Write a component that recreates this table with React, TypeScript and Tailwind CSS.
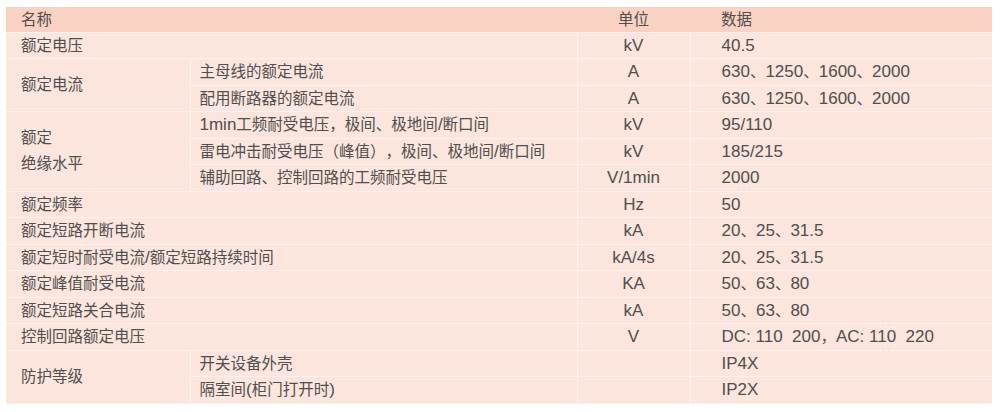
import React from "react";

type Row = {
  name?: string;
  unit: string;
  data: string;
};

const font = {
  fontFamily: '"Liberation Sans", "Noto Sans CJK SC", sans-serif',
};

const cell =
  "border-b border-[#fdf2ed] text-[15.5px] text-[#4f4f4f] leading-none whitespace-pre [text-spacing-trim:space-all]";
const line = "border-l border-[#fcece5]";

// latin runs are a bit larger than the CJK glyphs in the source
function T({ s }: { s: string }) {
  const parts = s.split(/([\x00-\x7F]+)/).filter(Boolean);
  return (
    <>
      {parts.map((p, i) =>
        /^[\x00-\x7F]+$/.test(p) ? (
          <span key={i} className="text-[17px]">
            {p}
          </span>
        ) : (
          <span key={i}>{p}</span>
        ),
      )}
    </>
  );
}

function Single({ name, unit, data }: Row) {
  return (
    <tr className="h-[26.5px]">
      <td colSpan={2} className={`${cell} pl-[15px]`}>
        <T s={name ?? ""} />
      </td>
      <td className={`${cell} ${line} text-center`}>
        <T s={unit} />
      </td>
      <td className={`${cell} ${line} pl-[31px]`}>
        <T s={data} />
      </td>
    </tr>
  );
}

function Sub({ sub, unit, data }: { sub: string; unit: string; data: string }) {
  return (
    <>
      <td className={`${cell} ${line} pl-[9px]`}>
        <T s={sub} />
      </td>
      <td className={`${cell} ${line} text-center`}>
        <T s={unit} />
      </td>
      <td className={`${cell} ${line} pl-[31px]`}>
        <T s={data} />
      </td>
    </>
  );
}

export default function App() {
  return (
    <div className="h-[412px] w-[1000px] bg-white pt-[7px] pl-[6px]" style={font}>
      <table className="w-[986px] table-fixed border-collapse bg-[#fbe5dc]">
        <colgroup>
          <col className="w-[184px]" />
          <col className="w-[387px]" />
          <col className="w-[113px]" />
          <col className="w-[302px]" />
        </colgroup>
        <tbody>
          <tr className="h-[25px] bg-[#f9d2c4]">
            <td colSpan={2} className={`${cell} pl-[15px]`}>
              名称
            </td>
            <td className={`${cell} text-center`}>单位</td>
            <td className={`${cell} pl-[31px]`}>数据</td>
          </tr>
          <Single name="额定电压" unit="kV" data="40.5" />
          <tr className="h-[26.5px]">
            <td rowSpan={2} className={`${cell} pl-[15px]`}>
              额定电流
            </td>
            <Sub sub="主母线的额定电流" unit="A" data="630、1250、1600、2000" />
          </tr>
          <tr className="h-[26.5px]">
            <Sub sub="配用断路器的额定电流" unit="A" data="630、1250、1600、2000" />
          </tr>
          <tr className="h-[26.5px]">
            <td rowSpan={3} className={`${cell} pl-[15px] !leading-[26px]`}>
              额定
              <br />
              绝缘水平
            </td>
            <Sub sub="1min工频耐受电压，极间、极地间/断口间" unit="kV" data="95/110" />
          </tr>
          <tr className="h-[26.5px]">
            <Sub sub="雷电冲击耐受电压（峰值），极间、极地间/断口间" unit="kV" data="185/215" />
          </tr>
          <tr className="h-[26.5px]">
            <Sub sub="辅助回路、控制回路的工频耐受电压" unit="V/1min" data="2000" />
          </tr>
          <Single name="额定频率" unit="Hz" data="50" />
          <Single name="额定短路开断电流" unit="kA" data="20、25、31.5" />
          <Single name="额定短时耐受电流/额定短路持续时间" unit="kA/4s" data="20、25、31.5" />
          <Single name="额定峰值耐受电流" unit="KA" data="50、63、80" />
          <Single name="额定短路关合电流" unit="kA" data="50、63、80" />
          <Single name="控制回路额定电压" unit="V" data="DC: 110  200，AC: 110  220" />
          <tr className="h-[26.5px]">
            <td rowSpan={2} className={`${cell} pl-[15px]`}>
              防护等级
            </td>
            <Sub sub="开关设备外壳" unit="" data="IP4X" />
          </tr>
          <tr className="h-[26.5px]">
            <Sub sub="隔室间(柜门打开时)" unit="" data="IP2X" />
          </tr>
        </tbody>
      </table>
    </div>
  );
}
